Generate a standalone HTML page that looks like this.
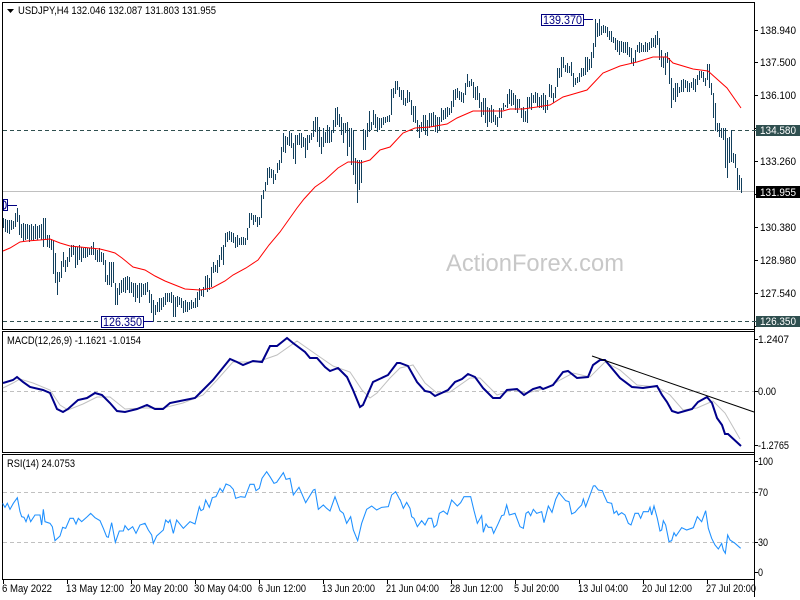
<!DOCTYPE html>
<html>
<head>
<meta charset="utf-8">
<title>USDJPY,H4</title>
<style>
html,body{margin:0;padding:0;background:#fff;width:800px;height:600px;overflow:hidden}
svg{display:block;position:absolute;left:0;top:0}
text{font-family:"Liberation Sans",sans-serif;font-size:11px;fill:#000}
</style>
</head>
<body>
<svg width="800" height="600" viewBox="0 0 800 600" xmlns="http://www.w3.org/2000/svg">
<rect width="800" height="600" fill="#fff"/>

<!-- watermark -->
<text x="446" y="271" style="font-size:24px;fill:#c8c8c8" textLength="178" lengthAdjust="spacingAndGlyphs">ActionForex.com</text>

<!-- frames -->
<g shape-rendering="crispEdges" fill="none" stroke="#000" stroke-width="1">
<path d="M2.5 2.5H754.5V329.5H2.5Z"/>
<path d="M2.5 331.5H754.5V452.5H2.5Z"/>
<path d="M2.5 454.5H754.5V579.5H2.5Z"/>
<path d="M754.5 2V597"/>
<path d="M755 30.5h3M755 62.5h3M755 95.5h3M755 128.5h3M755 161.5h3M755 194.5h3M755 227.5h3M755 260.5h3M755 293.5h3M755 326.5h3M755 339.5h3M755 391.5h3M755 445.5h3M755 461.5h3M755 492.5h3M755 542.5h3M755 572.5h3"/>
<path d="M3.5 580v4M67.5 580v4M131.5 580v4M195.5 580v4M259.5 580v4M323.5 580v4M387.5 580v4M451.5 580v4M515.5 580v4M579.5 580v4M643.5 580v4M707.5 580v4"/>
</g>

<!-- levels -->
<g shape-rendering="crispEdges" fill="none">
<path d="M3 191.5H754" stroke="#c0c0c0"/>
<path d="M3 130.5H756" stroke="#2f4f4f" stroke-dasharray="4 3"/>
<path d="M3 321.5H756" stroke="#2f4f4f" stroke-dasharray="4 3"/>
<path d="M3 391.5H754" stroke="#c0c0c0" stroke-dasharray="4 3"/>
<path d="M3 492.5H754" stroke="#c0c0c0" stroke-dasharray="4 3"/>
<path d="M3 542.5H754" stroke="#c0c0c0" stroke-dasharray="4 3"/>
</g>

<!-- price bars -->
<g transform="translate(.5,0)" shape-rendering="crispEdges">
<path fill="none" stroke="#123f5c" stroke-width="1" d="M3 218V228M5 219V232M7 220V233M9 220V234M11 220V230M13 221V229M15 213V227M17 208V222M19 215V235M21 224V238M23 223V241M25 224V240M27 224V239M29 225V242M31 224V240M33 226V241M35 224V239M37 226V240M39 225V238M41 224V240M43 218V247M45 218V240M47 235V247M49 235V248M51 239V250M53 240V274M55 253V283M57 272V295M59 272V282M61 261V278M63 252V267M65 260V272M67 257V267M69 248V262M71 245V257M73 245V255M75 247V268M77 247V265M79 245V260M81 247V262M83 248V258M85 248V258M87 248V257M89 248V255M91 246V255M93 242V255M95 248V260M97 250V262M99 248V262M101 252V262M103 253V265M105 260V282M107 275V285M109 262V285M111 262V287M113 262V283M115 283V305M117 288V305M119 283V295M121 280V293M123 278V292M125 277V293M127 276V290M129 277V293M131 282V293M133 283V297M135 283V302M137 285V298M139 283V303M141 283V297M143 284V295M145 283V295M147 282V292M149 290V303M151 294V313M153 300V321M155 305V315M157 302V312M159 298V312M161 298V310M163 297V307M165 293V305M167 293V302M169 293V302M171 292V303M173 295V317M175 297V317M177 296V307M179 297V305M181 298V308M183 301V313M185 300V312M187 302V312M189 302V310M191 300V309M193 302V308M195 298V308M197 292V307M199 288V300M201 290V296M203 287V297M205 276V290M207 275V292M209 278V290M211 267V287M213 262V273M215 265V272M217 260V273M219 255V267M221 247V260M223 245V265M225 233V247M227 232V242M229 231V240M231 232V242M233 233V243M235 237V248M237 235V247M239 238V245M241 237V245M243 237V245M245 238V245M247 228V240M249 213V228M251 213V220M253 215V225M255 215V222M257 217V227M259 217V225M261 195V218M263 190V199M265 182V191M267 168V185M269 167V178M271 169V178M273 170V184M275 174V180M277 163V173M279 160V170M281 147V163M283 133V152M285 136V153M287 137V145M289 131V146M291 133V148M293 143V159M295 135V164M297 135V145M299 133V145M301 133V148M303 137V147M305 138V158M307 135V150M309 135V143M311 133V140M313 121V137M315 117V132M317 117V142M319 127V147M321 137V154M323 128V147M325 132V143M327 125V143M329 127V143M331 130V142M333 120V133M335 108V127M337 107V125M339 114V127M341 117V135M343 123V143M345 123V133M347 122V156M349 128V147M351 128V165M353 130V175M355 158V184M357 160V203M359 160V190M361 160V183M363 129V150M365 130V150M367 123V137M369 111V132M371 122V130M373 110V125M375 114V128M377 117V132M379 118V130M381 118V128M383 117V125M385 117V123M387 116V122M389 115V122M391 89V115M393 88V98M395 81V94M397 81V90M399 87V97M401 90V100M403 90V105M405 98V106M407 90V103M409 92V102M411 100V115M413 106V122M415 106V123M417 120V132M419 125V138M421 122V132M423 115V130M425 115V135M427 120V136M429 113V128M431 113V127M433 112V127M435 115V132M437 117V133M439 117V130M441 108V122M443 110V120M445 108V119M447 107V117M449 108V115M451 101V113M453 90V107M455 89V100M457 88V98M459 91V100M461 92V102M463 93V103M465 83V95M467 74V87M469 81V87M471 79V86M473 82V98M475 87V100M477 86V100M479 93V108M481 102V117M483 98V115M485 98V123M487 107V127M489 108V122M491 105V123M493 109V122M495 115V125M497 117V127M499 108V118M501 108V118M503 103V110M505 105V107M507 94V108M509 89V104M511 90V106M513 93V105M515 95V110M517 99V113M519 99V108M521 108V118M523 107V122M525 111V122M527 97V123M529 97V108M531 93V110M533 95V103M535 92V103M537 93V107M539 97V108M541 95V108M543 93V110M545 95V113M547 100V110M549 84V97M551 85V98M553 93V103M555 87V98M557 68V87M559 68V78M561 57V77M563 57V68M565 65V72M567 63V73M569 66V73M571 62V76M573 73V87M575 78V85M577 77V83M579 73V82M581 68V77M583 68V76M585 57V75M587 57V72M589 59V70M591 52V68M593 43V58M595 19V47M597 23V37M599 19V36M601 26V35M603 25V33M605 26V33M607 27V37M609 31V40M611 31V42M613 37V43M615 38V50M617 40V52M619 41V55M621 41V52M623 42V53M625 42V53M627 42V55M629 47V57M631 48V63M633 58V66M635 50V62M637 45V52M639 42V53M641 43V52M643 45V52M645 42V52M647 43V52M649 42V50M651 38V48M653 38V47M655 35V48M657 31V45M659 38V60M661 50V67M663 57V68M665 53V75M667 52V63M669 58V84M671 78V108M673 88V100M675 83V102M677 83V97M679 87V93M681 80V92M683 79V92M685 80V88M687 81V92M689 83V92M691 82V88M693 78V90M695 79V92M697 75V85M699 71V80M701 71V78M703 72V82M705 78V86M707 64V80M709 64V88M711 83V95M713 93V118M715 103V131M717 123V132M719 123V137M721 128V138M723 128V140M725 128V168M727 138V178M729 137V163M731 130V162M733 153V163M735 154V168M737 168V190M739 175V190M741 178V193"/>
</g>

<!-- moving average -->
<polyline fill="none" stroke="#ff0000" stroke-width="1" points="3,251 10,248 20,242 27,241 40,240 50,239 60,243 70,246 80,247 90,248 100,249 108,251 115,253 122,258 133,267 145,270 155,276 165,281 175,285 185,289 200,290 212,288 225,281 233,275 246,268 258,260 269,245 280,232 297,208 304,199 315,187 325,180 338,168 348,162 356,162 360,163 370,160 380,150 390,147 403,133 415,128 430,127 447,124 457,118 473,111 490,111 503,111 510,109 523,109 537,107 543,106 550,105 563,97 570,95 587,90 603,73 620,66 637,62 653,57 667,57 673,63 693,69 708,71 727,88 741,108"/>

<!-- object labels -->
<g shape-rendering="crispEdges" fill="none" stroke="#000080">
<rect x="541.5" y="14.5" width="42" height="11" fill="#fff"/>
<path d="M584 19.5H593"/>
<rect x="101.5" y="316.5" width="42" height="11" fill="#fff"/>
<path d="M144 321.5H153"/>
<rect x="3.500" y="199.5" width="4" height="11" fill="#fff"/>
<path d="M8 205.5H17"/>
</g>
<text x="543" y="24" style="fill:#000080;font-size:11.5px" textLength="39" lengthAdjust="spacingAndGlyphs">139.370</text>
<text x="103" y="326" style="fill:#000080;font-size:11.5px" textLength="39" lengthAdjust="spacingAndGlyphs">126.350</text>
<path d="M3.600 201c2 0 2.600 1.600 2.600 4s-.6 4-2.600 4" fill="none" stroke="#000080" stroke-width="1"/>

<!-- MACD -->
<polyline fill="none" stroke="#c0c0c0" stroke-width="1" points="3,388 13,383 20,379 33,383 50,390 60,405 68,410 83,404 97,397 110,397 125,409 143,408 163,408 183,403 203,395 217,380 233,362 257,362 277,355 297,341 317,355 333,366 350,372 362,390 370,398 377,393 390,378 400,368 413,365 425,383 437,393 450,392 470,378 480,378 497,395 513,390 527,393 547,388 560,380 573,373 590,377 605,362 620,370 637,385 657,387 670,395 683,410 697,408 713,401 725,413 740,439"/>
<polyline fill="none" stroke="#00008b" stroke-width="2" points="3,383 13,380 17,377 23,382 30,387 43,390 50,393 57,409 63,412 68,409 78,400 87,398 95,393 102,395 110,403 117,411 125,412 137,409 147,405 155,409 163,409 170,403 180,401 195,398 200,393 213,380 230,359 237,362 243,365 253,361 262,362 270,346 277,346 287,338 293,343 305,352 310,358 317,358 325,367 330,371 338,368 347,377 353,390 360,407 363,405 373,382 388,375 397,363 400,363 408,366 417,382 425,391 430,392 435,396 448,390 455,382 462,379 468,374 475,377 483,388 493,398 500,398 507,390 517,389 524,395 533,389 540,387 543,389 553,385 563,372 568,371 577,378 588,377 593,365 600,360 605,360 620,378 632,387 643,388 657,386 662,395 667,402 672,411 678,413 692,409 698,402 707,397 712,403 717,418 722,425 725,434 728,434 741,446"/>
<line x1="592" y1="356" x2="754" y2="412" stroke="#000" stroke-width="1"/>

<!-- RSI -->
<g fill="none" stroke="#1e90ff">
<polyline transform="translate(0,450) scale(.33333)" stroke-width="3.2" points="8,160 15,172 22,160 30,178 40,160 52,143 60,185 65,200 72,202 78,215 85,195 92,215 105,195 120,195 125,225 130,178 135,215 150,220 157,230 165,272 180,258 188,232 197,235 210,205 220,205 228,222 235,205 245,215 262,200 272,190 285,203 300,212 310,235 320,260 325,262 335,218 346,277 358,243 370,243 375,227 385,240 398,230 408,250 420,225 435,220 445,240 455,255 460,280 470,258 490,240 497,210 505,218 510,210 520,250 530,210 550,235 570,215 585,222 598,170 603,182 610,178 617,150 628,172 637,143 648,140 660,115 668,125 678,102 690,107 700,118 707,145 722,140 735,142 750,103 762,103 768,122 778,115 786,85 800,65 810,80 822,100 830,97 850,68 858,88 870,85 880,135 897,112 905,130 917,158 940,120 945,118 955,178 970,165 980,175 990,183 1005,140 1020,182 1030,190 1040,220 1052,200 1060,240 1073,272 1085,220 1100,178 1115,168 1130,180 1145,172 1165,170 1175,135 1187,125 1200,150"/>
<polyline transform="translate(400,450) scale(.33333)" stroke-width="3.2" points="0,148 10,175 20,157 30,175 35,200 42,205 52,230 65,212 75,225 85,205 95,205 102,232 110,225 118,190 130,183 142,193 155,150 172,168 182,158 192,140 212,140 222,182 232,220 245,197 250,247 258,222 265,232 275,232 281,250 295,220 305,197 312,195 320,165 328,195 345,190 360,230 370,235 378,190 385,185 392,197 400,178 410,190 425,185 432,218 445,168 456,187 467,148 477,128 487,140 497,152 507,155 515,192 525,187 535,175 545,165 550,147 557,170 570,135 580,108 585,107 595,120 607,122 612,135 622,157 635,160 642,190 650,183 655,195 665,188 675,195 685,220 693,225 705,190 715,190 722,205 730,185 745,185 750,172 755,195 762,168 772,205 780,243 785,240 790,212 797,225 807,275 815,272 822,248 828,258 845,233 860,240 880,233 892,200 905,215 917,182 925,235 935,265 945,285 955,297 965,280 970,300 976,310 983,255 990,270 1005,280 1022,295"/>
</g>

<!-- titles -->
<path d="M7 9h7l-3.500 4z" fill="#000"/>
<text x="18" y="14" textLength="198" lengthAdjust="spacingAndGlyphs">USDJPY,H4  132.046 132.087 131.803 131.955</text>
<text x="7" y="344" textLength="134" lengthAdjust="spacingAndGlyphs">MACD(12,26,9) -1.1621 -1.0154</text>
<text x="7" y="467" textLength="68" lengthAdjust="spacingAndGlyphs">RSI(14) 24.0753</text>

<!-- axis labels -->
<g>
<text x="760" y="34" textLength="36" lengthAdjust="spacingAndGlyphs">138.940</text>
<text x="760" y="66" textLength="36" lengthAdjust="spacingAndGlyphs">137.500</text>
<text x="760" y="99" textLength="36" lengthAdjust="spacingAndGlyphs">136.100</text>
<text x="760" y="165" textLength="36" lengthAdjust="spacingAndGlyphs">133.260</text>
<text x="760" y="231" textLength="36" lengthAdjust="spacingAndGlyphs">130.380</text>
<text x="760" y="264" textLength="36" lengthAdjust="spacingAndGlyphs">128.980</text>
<text x="760" y="297" textLength="36" lengthAdjust="spacingAndGlyphs">127.540</text>
<rect x="756" y="125" width="44" height="11" fill="#2f4f4f"/>
<text x="760" y="134" style="fill:#fff" textLength="36" lengthAdjust="spacingAndGlyphs">134.580</text>
<rect x="756" y="186" width="44" height="12" fill="#000"/>
<text x="760" y="196" style="fill:#fff" textLength="36" lengthAdjust="spacingAndGlyphs">131.955</text>
<rect x="756" y="316" width="44" height="11" fill="#2f4f4f"/>
<text x="760" y="325" style="fill:#fff" textLength="36" lengthAdjust="spacingAndGlyphs">126.350</text>

<text x="758" y="343" textLength="31" lengthAdjust="spacingAndGlyphs">1.2407</text>
<text x="758" y="395" textLength="18" lengthAdjust="spacingAndGlyphs">0.00</text>
<text x="758" y="449" textLength="31" lengthAdjust="spacingAndGlyphs">-1.2765</text>
<text x="758" y="465" textLength="15" lengthAdjust="spacingAndGlyphs">100</text>
<text x="758" y="496" textLength="10" lengthAdjust="spacingAndGlyphs">70</text>
<text x="758" y="546" textLength="10" lengthAdjust="spacingAndGlyphs">30</text>
<text x="758" y="576" textLength="5" lengthAdjust="spacingAndGlyphs">0</text>
</g>

<!-- time axis -->
<g>
<text x="2" y="592" textLength="50" lengthAdjust="spacingAndGlyphs">6 May 2022</text>
<text x="66" y="592" textLength="58" lengthAdjust="spacingAndGlyphs">13 May 12:00</text>
<text x="130" y="592" textLength="58" lengthAdjust="spacingAndGlyphs">20 May 20:00</text>
<text x="194" y="592" textLength="58" lengthAdjust="spacingAndGlyphs">30 May 04:00</text>
<text x="258" y="592" textLength="48" lengthAdjust="spacingAndGlyphs">6 Jun 12:00</text>
<text x="322" y="592" textLength="53" lengthAdjust="spacingAndGlyphs">13 Jun 20:00</text>
<text x="386" y="592" textLength="53" lengthAdjust="spacingAndGlyphs">21 Jun 04:00</text>
<text x="450" y="592" textLength="53" lengthAdjust="spacingAndGlyphs">28 Jun 12:00</text>
<text x="514" y="592" textLength="45" lengthAdjust="spacingAndGlyphs">5 Jul 20:00</text>
<text x="578" y="592" textLength="50" lengthAdjust="spacingAndGlyphs">13 Jul 04:00</text>
<text x="642" y="592" textLength="50" lengthAdjust="spacingAndGlyphs">20 Jul 12:00</text>
<text x="706" y="592" textLength="50" lengthAdjust="spacingAndGlyphs">27 Jul 20:00</text>
</g>
</svg>
</body>
</html>
